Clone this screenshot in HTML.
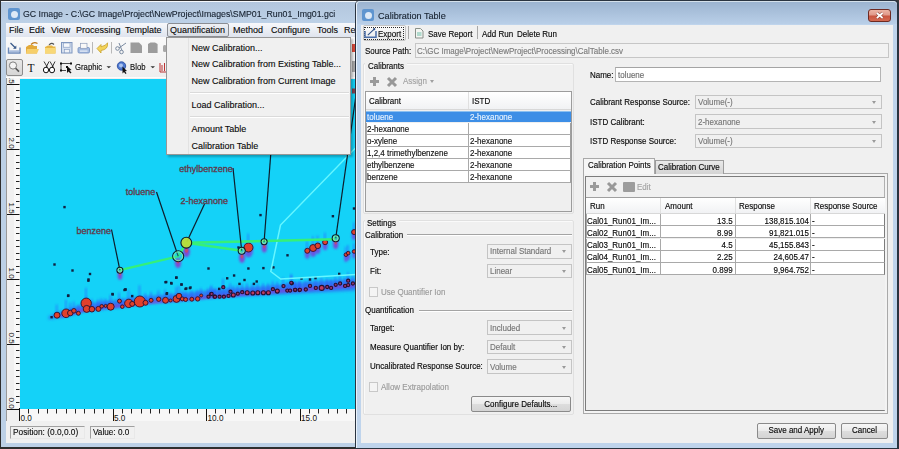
<!DOCTYPE html>
<html><head><meta charset="utf-8">
<style>
*{box-sizing:border-box}
html,body{margin:0;padding:0}
body{width:899px;height:449px;overflow:hidden;position:relative;background:#3a3a3a;font-family:"Liberation Sans",sans-serif;font-size:9px;color:#1e1e1e}
.a{position:absolute}
.t{position:absolute;white-space:nowrap;height:12px;line-height:12px;-webkit-text-stroke:0.12px currentColor;color:#0a0a0a}
.cb{border:1px solid #c4c4c4;background:#f0f0f0}
.arr{position:absolute;width:0;height:0;border-left:2.5px solid transparent;border-right:2.5px solid transparent;border-top:3px solid #9a9a9a}
.chk{width:9.5px;height:9.5px;border:1px solid #c8c8c8;background:#f4f4f4}
.btn{border:1px solid #8a8a8a;border-radius:2px;background:linear-gradient(#f6f6f6 0%,#ebebeb 50%,#dddddd 51%,#d4d4d4 100%)}
.d .t{font-size:8.6px;transform:scaleX(.93);transform-origin:0 50%;color:#0a0a0a;-webkit-text-stroke:0.15px currentColor}
</style></head><body>

<!-- ============ LEFT WINDOW ============ -->
<div class="a" style="left:0;top:0;width:362px;height:449px;background:#2e2e2e"></div>
<div class="a" style="left:1px;top:1px;width:360px;height:446px;background:#bcd0e6"></div>
<div class="a" style="left:1px;top:1px;width:360px;height:22px;background:linear-gradient(#b2c6dd,#bdd1e7);border-top:1px solid #f4f8fc"></div>
<!-- app icon -->
<div class="a" style="left:8px;top:8px;width:12px;height:12px;border-radius:2px;background:#5f95cf"></div>
<div class="a" style="left:10.5px;top:10.5px;width:7px;height:7px;border-radius:50%;background:#dde9f6"></div>
<div class="t" style="left:23px;top:7.8px;font-size:9.6px;transform:scaleX(.915);transform-origin:0 50%;color:#15202e">GC Image - C:\GC Image\Project\NewProject\Images\SMP01_Run01_Img01.gci</div>

<!-- menu bar -->
<div class="a" style="left:6px;top:23px;width:356px;height:14px;background:linear-gradient(#f7f8fb,#dfe4ee)"></div>
<div class="t" style="left:9px;top:24px">File</div>
<div class="t" style="left:29px;top:24px">Edit</div>
<div class="t" style="left:51px;top:24px">View</div>
<div class="t" style="left:76px;top:24px">Processing</div>
<div class="t" style="left:125px;top:24px">Template</div>
<div class="a" style="left:167px;top:23px;width:62px;height:14px;border:1px solid #8a8d93;border-radius:2px;background:linear-gradient(#eef0f4,#d9dde4)"></div>
<div class="t" style="left:170px;top:24px">Quantification</div>
<div class="t" style="left:233px;top:24px">Method</div>
<div class="t" style="left:271px;top:24px">Configure</div>
<div class="t" style="left:317px;top:24px">Tools</div>
<div class="t" style="left:344px;top:24px">Re</div>

<!-- toolbars -->
<div class="a" style="left:6px;top:37px;width:356px;height:41px;background:linear-gradient(#f9f9f9,#eeeeee)"></div>


<!-- toolbar icons row1 -->
<svg class="a" style="left:0;top:36px" width="170" height="42" viewBox="0 36 170 42">
 <!-- import tray -->
 <path d="M8.5,47.5 L8.5,53 L20,53 L20,47.5" fill="none" stroke="#6a88b8" stroke-width="1.4"/>
 <rect x="9.2" y="50.3" width="10" height="2" fill="#a9bddd"/>
 <path d="M10.5,43 L15.5,48" stroke="#3a5a8a" stroke-width="1.2"/>
 <path d="M13,48.8 L16.3,48.8 L16.3,45.5 Z" fill="#3a5a8a"/>
 <!-- open folder -->
 <path d="M26,47 L29,45 L33,45 L34,46 L37,46 L37,53.5 L26,53.5 Z" fill="#e3a93a"/>
 <path d="M27,49 L39,49 L37,53.5 L26,53.5 Z" fill="#f6cf6a"/>
 <path d="M31,44.5 Q34,41.5 37.5,43.5" stroke="#c07818" stroke-width="1.3" fill="none"/>
 <!-- folder -->
 <path d="M45,47 L48,45.5 L52,45.5 L53,46.5 L55.5,46.5 L55.5,53.5 L45,53.5 Z" fill="#e7b545"/>
 <rect x="45" y="48" width="10.5" height="5.5" fill="#f8d877"/>
 <path d="M49,45 Q51.5,42 54,44.5" stroke="#555" stroke-width="1.1" fill="none"/>
 <!-- save -->
 <rect x="61.5" y="42.5" width="10.5" height="10.5" fill="#d4deee" stroke="#8098c0" stroke-width="1"/>
 <rect x="63.5" y="43" width="6.5" height="4.2" fill="#f6f8fb" stroke="#8098c0" stroke-width="0.6"/>
 <rect x="64.3" y="49.3" width="5" height="3.5" fill="#f0f3f8" stroke="#8098c0" stroke-width="0.6"/>
 <!-- print -->
 <rect x="78" y="47.5" width="11.5" height="5.5" rx="1.2" fill="#a6bce0" stroke="#6f8cbc" stroke-width="0.8"/>
 <rect x="80.5" y="43.3" width="6.5" height="5" fill="#f8f8f8" stroke="#8a9ab8" stroke-width="0.7"/>
 <rect x="80" y="50.5" width="7.5" height="1.2" fill="#e8eef8"/>
 <rect x="92" y="42" width="1" height="11.5" fill="#b8b8b8"/>
 <!-- undo -->
 <path d="M97,48.5 L101,44.5 L101,46.8 Q106.5,45.5 107.5,42.8 Q108.5,49.5 101,50.5 L101,53 Z" fill="#f3d35a" stroke="#c9a22a" stroke-width="0.8"/>
 <rect x="111" y="42" width="1" height="11.5" fill="#b8b8b8"/>
 <!-- scissors -->
 <circle cx="117.5" cy="48.5" r="1.8" fill="none" stroke="#7a8aa0" stroke-width="1"/>
 <circle cx="121.5" cy="52" r="1.8" fill="none" stroke="#7a8aa0" stroke-width="1"/>
 <path d="M119,48 L126,43 M122,50.5 L119,43" stroke="#7a8aa0" stroke-width="1"/>
 <!-- copy/paste -->
 <path d="M130.5,42.5 L139,42.5 L142,45.5 L142,53 L130.5,53 Z" fill="#9c9c9c"/>
 <path d="M148,44 L150.5,42.5 L155,42.5 L157.6,44 L157.6,53 L148,53 Z" fill="#9c9c9c"/>
 <rect x="163" y="45" width="3.5" height="7" rx="1.5" fill="#a8a8a8"/>
</svg>
<!-- row2 -->
<div class="a" style="left:6px;top:59px;width:17px;height:16.5px;border:1px solid #8c8c8c;border-radius:2px;background:linear-gradient(#e8e8e8,#d6d6d6)"></div>
<svg class="a" style="left:0;top:56px" width="170" height="22" viewBox="0 56 170 22">
 <circle cx="13" cy="65.5" r="3.6" fill="#f4f4f4" stroke="#7e7e7e" stroke-width="1"/>
 <path d="M15.6,68.2 L19,71.6" stroke="#555" stroke-width="1.6"/>
 <text x="27.5" y="71.5" font-family="Liberation Serif" font-size="11.5" fill="#111">T</text>
 <!-- binoculars -->
 <ellipse cx="46" cy="70" rx="2.6" ry="2.8" fill="#fff" stroke="#111" stroke-width="1"/>
 <ellipse cx="52" cy="70" rx="2.6" ry="2.8" fill="#fff" stroke="#111" stroke-width="1"/>
 <path d="M44,61.5 L47.5,67.5 M49,61.5 L46,67.5 M50,61.5 L53.5,67.5 M55,61.5 L52,67.5" stroke="#222" stroke-width="0.9"/>
 <!-- graphic -->
 <path d="M61,63.5 L71,63.5 M61,63.5 L61,70.5 L66,70.5" stroke="#222" stroke-width="0.8" fill="none"/>
 <rect x="60" y="62.5" width="2" height="2" fill="#111"/><rect x="70" y="62.5" width="2" height="2" fill="#111"/><rect x="60" y="69.5" width="2" height="2" fill="#111"/><rect x="66" y="66" width="2" height="2" fill="#111"/>
 <path d="M67,66 L67,73 L68.5,71.5 L70.5,73.5 L71.5,72.5 L69.5,70.5 L71.5,70 Z" fill="#111"/>
 <path d="M106.5,66.3 L111,66.3 L108.75,68.3 Z" fill="#333"/>
 <!-- blob -->
 <circle cx="121.5" cy="66" r="4.2" fill="#4e78d0" stroke="#2d4fa0" stroke-width="0.9"/>
 <circle cx="121" cy="65.5" r="2" fill="#a9c2ee"/>
 <path d="M122.5,66.5 L122.5,73.5 L124,72 L125.5,74 L126.5,73.2 L125,71.3 L127,71 Z" fill="#111"/>
 <path d="M150.5,66.3 L155,66.3 L152.75,68.3 Z" fill="#333"/>
 <path d="M160,63 L160,72 L167,72" stroke="#b33" stroke-width="1" fill="none"/>
 <path d="M162,71 L162,65 M164.5,71 L164.5,63" stroke="#b33" stroke-width="1"/>
</svg>
<div class="t" style="left:74.7px;top:61px;font-size:8.6px;transform:scaleX(.9);transform-origin:0 50%">Graphic</div>
<div class="t" style="left:130px;top:61px;font-size:8.6px;transform:scaleX(.9);transform-origin:0 50%">Blob</div>
<div class="a" style="left:6px;top:76.5px;width:356px;height:1px;background:#fdfdfd"></div>

<div class="a" style="left:351.5px;top:43.5px;width:3.5px;height:8px;background:#d84a3a"></div>
<div class="a" style="left:351.5px;top:61px;width:3.5px;height:11px;background:#a8a8a8"></div>
<!-- rulers -->
<svg class="a" style="left:0;top:78px" width="360" height="344" viewBox="0 78 360 344">
<rect x="6" y="78" width="354" height="344" fill="#f0f0f0"/>
<rect x="14" y="78" width="5.5" height="330" fill="#f8f8f8"/>
<rect x="19.5" y="408" width="340" height="13.3" fill="#f7f7f7"/>
<rect x="6" y="78" width="1" height="344" fill="#9a9a9a"/>
<rect x="7" y="84" width="12.5" height="1" fill="#111"/>
<rect x="16" y="90" width="3.5" height="1" fill="#222"/>
<rect x="16" y="97" width="3.5" height="1" fill="#222"/>
<rect x="16" y="103" width="3.5" height="1" fill="#222"/>
<rect x="16" y="110" width="3.5" height="1" fill="#222"/>
<rect x="16" y="116" width="3.5" height="1" fill="#222"/>
<rect x="16" y="123" width="3.5" height="1" fill="#222"/>
<rect x="16" y="129" width="3.5" height="1" fill="#222"/>
<rect x="16" y="136" width="3.5" height="1" fill="#222"/>
<rect x="16" y="142" width="3.5" height="1" fill="#222"/>
<rect x="7" y="149" width="12.5" height="1" fill="#111"/>
<rect x="16" y="155" width="3.5" height="1" fill="#222"/>
<rect x="16" y="162" width="3.5" height="1" fill="#222"/>
<rect x="16" y="168" width="3.5" height="1" fill="#222"/>
<rect x="16" y="175" width="3.5" height="1" fill="#222"/>
<rect x="16" y="181" width="3.5" height="1" fill="#222"/>
<rect x="16" y="188" width="3.5" height="1" fill="#222"/>
<rect x="16" y="194" width="3.5" height="1" fill="#222"/>
<rect x="16" y="201" width="3.5" height="1" fill="#222"/>
<rect x="16" y="207" width="3.5" height="1" fill="#222"/>
<rect x="7" y="214" width="12.5" height="1" fill="#111"/>
<rect x="16" y="220" width="3.5" height="1" fill="#222"/>
<rect x="16" y="227" width="3.5" height="1" fill="#222"/>
<rect x="16" y="233" width="3.5" height="1" fill="#222"/>
<rect x="16" y="240" width="3.5" height="1" fill="#222"/>
<rect x="16" y="246" width="3.5" height="1" fill="#222"/>
<rect x="16" y="253" width="3.5" height="1" fill="#222"/>
<rect x="16" y="259" width="3.5" height="1" fill="#222"/>
<rect x="16" y="266" width="3.5" height="1" fill="#222"/>
<rect x="16" y="272" width="3.5" height="1" fill="#222"/>
<rect x="7" y="279" width="12.5" height="1" fill="#111"/>
<rect x="16" y="285" width="3.5" height="1" fill="#222"/>
<rect x="16" y="292" width="3.5" height="1" fill="#222"/>
<rect x="16" y="298" width="3.5" height="1" fill="#222"/>
<rect x="16" y="305" width="3.5" height="1" fill="#222"/>
<rect x="16" y="311" width="3.5" height="1" fill="#222"/>
<rect x="16" y="318" width="3.5" height="1" fill="#222"/>
<rect x="16" y="324" width="3.5" height="1" fill="#222"/>
<rect x="16" y="331" width="3.5" height="1" fill="#222"/>
<rect x="16" y="337" width="3.5" height="1" fill="#222"/>
<rect x="7" y="344" width="12.5" height="1" fill="#111"/>
<rect x="16" y="350" width="3.5" height="1" fill="#222"/>
<rect x="16" y="357" width="3.5" height="1" fill="#222"/>
<rect x="16" y="363" width="3.5" height="1" fill="#222"/>
<rect x="16" y="370" width="3.5" height="1" fill="#222"/>
<rect x="16" y="376" width="3.5" height="1" fill="#222"/>
<rect x="16" y="383" width="3.5" height="1" fill="#222"/>
<rect x="16" y="389" width="3.5" height="1" fill="#222"/>
<rect x="16" y="396" width="3.5" height="1" fill="#222"/>
<rect x="16" y="402" width="3.5" height="1" fill="#222"/>
<rect x="7" y="409" width="12.5" height="1" fill="#111"/>
<text transform="translate(8.6,72.5) rotate(90)" font-family="Liberation Sans" font-size="8" fill="#111">2.5</text>
<text transform="translate(8.6,137.5) rotate(90)" font-family="Liberation Sans" font-size="8" fill="#111">2.0</text>
<text transform="translate(8.6,202.5) rotate(90)" font-family="Liberation Sans" font-size="8" fill="#111">1.5</text>
<text transform="translate(8.6,267.5) rotate(90)" font-family="Liberation Sans" font-size="8" fill="#111">1.0</text>
<text transform="translate(8.6,332.5) rotate(90)" font-family="Liberation Sans" font-size="8" fill="#111">0.5</text>
<text transform="translate(8.6,397.5) rotate(90)" font-family="Liberation Sans" font-size="8" fill="#111">0.0</text>
<rect x="19" y="408" width="1" height="13" fill="#111"/>
<rect x="28" y="409" width="1" height="4.5" fill="#222"/>
<rect x="38" y="409" width="1" height="4.5" fill="#222"/>
<rect x="47" y="409" width="1" height="4.5" fill="#222"/>
<rect x="56" y="409" width="1" height="4.5" fill="#222"/>
<rect x="66" y="409" width="1" height="4.5" fill="#222"/>
<rect x="75" y="409" width="1" height="4.5" fill="#222"/>
<rect x="84" y="409" width="1" height="4.5" fill="#222"/>
<rect x="94" y="409" width="1" height="4.5" fill="#222"/>
<rect x="103" y="409" width="1" height="4.5" fill="#222"/>
<rect x="113" y="408" width="1" height="13" fill="#111"/>
<rect x="122" y="409" width="1" height="4.5" fill="#222"/>
<rect x="131" y="409" width="1" height="4.5" fill="#222"/>
<rect x="141" y="409" width="1" height="4.5" fill="#222"/>
<rect x="150" y="409" width="1" height="4.5" fill="#222"/>
<rect x="159" y="409" width="1" height="4.5" fill="#222"/>
<rect x="169" y="409" width="1" height="4.5" fill="#222"/>
<rect x="178" y="409" width="1" height="4.5" fill="#222"/>
<rect x="187" y="409" width="1" height="4.5" fill="#222"/>
<rect x="197" y="409" width="1" height="4.5" fill="#222"/>
<rect x="206" y="408" width="1" height="13" fill="#111"/>
<rect x="215" y="409" width="1" height="4.5" fill="#222"/>
<rect x="225" y="409" width="1" height="4.5" fill="#222"/>
<rect x="234" y="409" width="1" height="4.5" fill="#222"/>
<rect x="243" y="409" width="1" height="4.5" fill="#222"/>
<rect x="253" y="409" width="1" height="4.5" fill="#222"/>
<rect x="262" y="409" width="1" height="4.5" fill="#222"/>
<rect x="271" y="409" width="1" height="4.5" fill="#222"/>
<rect x="281" y="409" width="1" height="4.5" fill="#222"/>
<rect x="290" y="409" width="1" height="4.5" fill="#222"/>
<rect x="300" y="408" width="1" height="13" fill="#111"/>
<rect x="309" y="409" width="1" height="4.5" fill="#222"/>
<rect x="318" y="409" width="1" height="4.5" fill="#222"/>
<rect x="328" y="409" width="1" height="4.5" fill="#222"/>
<rect x="337" y="409" width="1" height="4.5" fill="#222"/>
<rect x="346" y="409" width="1" height="4.5" fill="#222"/>
<text x="20.5" y="420.5" font-family="Liberation Sans" font-size="8.2" fill="#111">0.0</text>
<text x="114.0" y="420.5" font-family="Liberation Sans" font-size="8.2" fill="#111">5.0</text>
<text x="207.5" y="420.5" font-family="Liberation Sans" font-size="8.2" fill="#111">10.0</text>
<text x="301.0" y="420.5" font-family="Liberation Sans" font-size="8.2" fill="#111">15.0</text>
</svg>
<!--PLOT--><svg class="a" style="left:19.5px;top:78.5px" width="336" height="330" viewBox="19.5 78.5 336 330">
<defs><filter id="bl" x="-50%" y="-50%" width="200%" height="200%"><feGaussianBlur stdDeviation="1.6"/></filter><filter id="bl2" x="-50%" y="-50%" width="200%" height="200%"><feGaussianBlur stdDeviation="0.9"/></filter></defs>
<rect x="19.5" y="78.5" width="336" height="330" fill="#14d2f8"/>
<path d="M48,316 L60,311 L85,303 L120,299 L140,296 L180,293 L215,289 L260,286 L300,282 L356,278 L356,290 L300,293 L260,295 L215,297 L180,300 L140,303 L120,307 L85,311 L60,317 L48,319 Z" fill="#3a3cf0" opacity="0.55" filter="url(#bl)"/>
<path d="M60,316 L85,309 L140,303 L215,296 L300,289 L356,285" stroke="#8a36d8" stroke-width="3" fill="none" opacity="0.7" filter="url(#bl2)"/>
<rect x="55.3" y="304.1" width="1.8" height="10.6" fill="#2f44ff" opacity="0.45" filter="url(#bl2)"/>
<rect x="64.4" y="299.3" width="1.8" height="13.5" fill="#2f44ff" opacity="0.45" filter="url(#bl2)"/>
<rect x="68.6" y="302.3" width="1.8" height="10.2" fill="#2f44ff" opacity="0.45" filter="url(#bl2)"/>
<rect x="72.2" y="301.2" width="1.8" height="9.1" fill="#2f44ff" opacity="0.45" filter="url(#bl2)"/>
<rect x="76.7" y="304.4" width="1.8" height="8.4" fill="#2f44ff" opacity="0.45" filter="url(#bl2)"/>
<rect x="84.5" y="287.4" width="1.8" height="15.4" fill="#2f44ff" opacity="0.45" filter="url(#bl2)"/>
<rect x="85.0" y="296.7" width="1.8" height="11.7" fill="#2f44ff" opacity="0.45" filter="url(#bl2)"/>
<rect x="90.2" y="298.5" width="1.8" height="10.2" fill="#2f44ff" opacity="0.45" filter="url(#bl2)"/>
<rect x="96.7" y="298.9" width="1.8" height="9.5" fill="#2f44ff" opacity="0.45" filter="url(#bl2)"/>
<rect x="100.0" y="297.8" width="1.8" height="8.0" fill="#2f44ff" opacity="0.45" filter="url(#bl2)"/>
<rect x="103.9" y="298.1" width="1.8" height="7.3" fill="#2f44ff" opacity="0.45" filter="url(#bl2)"/>
<rect x="109.0" y="294.5" width="1.8" height="11.7" fill="#2f44ff" opacity="0.45" filter="url(#bl2)"/>
<rect x="117.8" y="292.2" width="1.8" height="8.4" fill="#2f44ff" opacity="0.45" filter="url(#bl2)"/>
<rect x="120.6" y="298.2" width="1.8" height="8.0" fill="#2f44ff" opacity="0.45" filter="url(#bl2)"/>
<rect x="127.1" y="289.7" width="1.8" height="13.2" fill="#2f44ff" opacity="0.45" filter="url(#bl2)"/>
<rect x="130.5" y="293.9" width="1.8" height="9.5" fill="#2f44ff" opacity="0.45" filter="url(#bl2)"/>
<rect x="138.1" y="284.9" width="1.8" height="16.1" fill="#2f44ff" opacity="0.45" filter="url(#bl2)"/>
<rect x="143.8" y="292.8" width="1.8" height="9.5" fill="#2f44ff" opacity="0.45" filter="url(#bl2)"/>
<rect x="149.4" y="291.4" width="1.8" height="8.4" fill="#2f44ff" opacity="0.45" filter="url(#bl2)"/>
<rect x="157.0" y="289.9" width="1.8" height="8.8" fill="#2f44ff" opacity="0.45" filter="url(#bl2)"/>
<rect x="163.8" y="289.2" width="1.8" height="10.6" fill="#2f44ff" opacity="0.45" filter="url(#bl2)"/>
<rect x="168.9" y="292.7" width="1.8" height="7.3" fill="#2f44ff" opacity="0.45" filter="url(#bl2)"/>
<rect x="174.8" y="286.7" width="1.8" height="11.7" fill="#2f44ff" opacity="0.45" filter="url(#bl2)"/>
<rect x="177.3" y="285.4" width="1.8" height="10.2" fill="#2f44ff" opacity="0.45" filter="url(#bl2)"/>
<rect x="180.6" y="290.0" width="1.8" height="8.4" fill="#2f44ff" opacity="0.45" filter="url(#bl2)"/>
<rect x="183.9" y="290.6" width="1.8" height="8.4" fill="#2f44ff" opacity="0.45" filter="url(#bl2)"/>
<rect x="190.1" y="290.3" width="1.8" height="8.4" fill="#2f44ff" opacity="0.45" filter="url(#bl2)"/>
<rect x="196.0" y="289.6" width="1.8" height="8.8" fill="#2f44ff" opacity="0.45" filter="url(#bl2)"/>
<rect x="199.5" y="287.7" width="1.8" height="7.3" fill="#2f44ff" opacity="0.45" filter="url(#bl2)"/>
<rect x="206.8" y="287.8" width="1.8" height="8.4" fill="#2f44ff" opacity="0.45" filter="url(#bl2)"/>
<rect x="209.5" y="286.3" width="1.8" height="7.3" fill="#2f44ff" opacity="0.45" filter="url(#bl2)"/>
<rect x="212.8" y="288.9" width="1.8" height="7.3" fill="#2f44ff" opacity="0.45" filter="url(#bl2)"/>
<rect x="209.9" y="285.0" width="1.8" height="8.4" fill="#2f44ff" opacity="0.45" filter="url(#bl2)"/>
<rect x="213.3" y="287.8" width="1.8" height="8.4" fill="#2f44ff" opacity="0.45" filter="url(#bl2)"/>
<rect x="217.9" y="287.8" width="1.8" height="8.4" fill="#2f44ff" opacity="0.45" filter="url(#bl2)"/>
<rect x="222.2" y="287.8" width="1.8" height="8.4" fill="#2f44ff" opacity="0.45" filter="url(#bl2)"/>
<rect x="226.8" y="287.0" width="1.8" height="8.4" fill="#2f44ff" opacity="0.45" filter="url(#bl2)"/>
<rect x="231.6" y="285.0" width="1.8" height="9.5" fill="#2f44ff" opacity="0.45" filter="url(#bl2)"/>
<rect x="236.1" y="284.8" width="1.8" height="8.4" fill="#2f44ff" opacity="0.45" filter="url(#bl2)"/>
<rect x="240.5" y="283.3" width="1.8" height="8.4" fill="#2f44ff" opacity="0.45" filter="url(#bl2)"/>
<rect x="245.5" y="282.8" width="1.8" height="9.5" fill="#2f44ff" opacity="0.45" filter="url(#bl2)"/>
<rect x="251.1" y="283.0" width="1.8" height="9.5" fill="#2f44ff" opacity="0.45" filter="url(#bl2)"/>
<rect x="256.1" y="282.8" width="1.8" height="9.5" fill="#2f44ff" opacity="0.45" filter="url(#bl2)"/>
<rect x="261.7" y="282.8" width="1.8" height="9.5" fill="#2f44ff" opacity="0.45" filter="url(#bl2)"/>
<rect x="266.7" y="282.8" width="1.8" height="9.5" fill="#2f44ff" opacity="0.45" filter="url(#bl2)"/>
<rect x="271.2" y="280.3" width="1.8" height="8.4" fill="#2f44ff" opacity="0.45" filter="url(#bl2)"/>
<rect x="275.6" y="281.1" width="1.8" height="9.5" fill="#2f44ff" opacity="0.45" filter="url(#bl2)"/>
<rect x="281.8" y="277.2" width="1.8" height="8.4" fill="#2f44ff" opacity="0.45" filter="url(#bl2)"/>
<rect x="285.6" y="281.7" width="1.8" height="8.4" fill="#2f44ff" opacity="0.45" filter="url(#bl2)"/>
<rect x="288.4" y="281.7" width="1.8" height="8.4" fill="#2f44ff" opacity="0.45" filter="url(#bl2)"/>
<rect x="293.4" y="281.1" width="1.8" height="8.4" fill="#2f44ff" opacity="0.45" filter="url(#bl2)"/>
<rect x="297.8" y="281.1" width="1.8" height="8.4" fill="#2f44ff" opacity="0.45" filter="url(#bl2)"/>
<rect x="228.8" y="282.8" width="1.8" height="8.4" fill="#2f44ff" opacity="0.45" filter="url(#bl2)"/>
<rect x="221.6" y="278.3" width="1.8" height="8.4" fill="#2f44ff" opacity="0.45" filter="url(#bl2)"/>
<rect x="290.1" y="274.4" width="1.8" height="8.4" fill="#2f44ff" opacity="0.45" filter="url(#bl2)"/>
<rect x="289.6" y="273.9" width="1.8" height="8.4" fill="#2f44ff" opacity="0.45" filter="url(#bl2)"/>
<rect x="293.5" y="280.9" width="1.8" height="8.4" fill="#2f44ff" opacity="0.45" filter="url(#bl2)"/>
<rect x="298.2" y="280.9" width="1.8" height="8.4" fill="#2f44ff" opacity="0.45" filter="url(#bl2)"/>
<rect x="304.1" y="280.6" width="1.8" height="8.4" fill="#2f44ff" opacity="0.45" filter="url(#bl2)"/>
<rect x="308.3" y="277.0" width="1.8" height="8.4" fill="#2f44ff" opacity="0.45" filter="url(#bl2)"/>
<rect x="314.1" y="279.0" width="1.8" height="8.4" fill="#2f44ff" opacity="0.45" filter="url(#bl2)"/>
<rect x="320.0" y="276.8" width="1.8" height="10.6" fill="#2f44ff" opacity="0.45" filter="url(#bl2)"/>
<rect x="325.5" y="278.1" width="1.8" height="8.4" fill="#2f44ff" opacity="0.45" filter="url(#bl2)"/>
<rect x="329.4" y="279.0" width="1.8" height="8.4" fill="#2f44ff" opacity="0.45" filter="url(#bl2)"/>
<rect x="334.0" y="275.9" width="1.8" height="8.4" fill="#2f44ff" opacity="0.45" filter="url(#bl2)"/>
<rect x="338.4" y="274.6" width="1.8" height="8.4" fill="#2f44ff" opacity="0.45" filter="url(#bl2)"/>
<rect x="343.4" y="277.0" width="1.8" height="8.4" fill="#2f44ff" opacity="0.45" filter="url(#bl2)"/>
<rect x="346.5" y="271.8" width="1.8" height="8.4" fill="#2f44ff" opacity="0.45" filter="url(#bl2)"/>
<rect x="346.5" y="276.2" width="1.8" height="8.4" fill="#2f44ff" opacity="0.45" filter="url(#bl2)"/>
<rect x="351.2" y="274.6" width="1.8" height="8.4" fill="#2f44ff" opacity="0.45" filter="url(#bl2)"/>
<rect x="246.8" y="233.1" width="1.8" height="13.9" fill="#2f44ff" opacity="0.45" filter="url(#bl2)"/>
<rect x="305.6" y="240.8" width="1.8" height="9.5" fill="#2f44ff" opacity="0.45" filter="url(#bl2)"/>
<rect x="311.4" y="235.8" width="1.8" height="11.7" fill="#2f44ff" opacity="0.45" filter="url(#bl2)"/>
<rect x="316.1" y="235.1" width="1.8" height="10.2" fill="#2f44ff" opacity="0.45" filter="url(#bl2)"/>
<rect x="323.4" y="232.2" width="1.8" height="9.5" fill="#2f44ff" opacity="0.45" filter="url(#bl2)"/>
<rect x="352.4" y="222.1" width="1.8" height="9.5" fill="#2f44ff" opacity="0.45" filter="url(#bl2)"/>
<rect x="344.2" y="246.2" width="1.8" height="8.0" fill="#2f44ff" opacity="0.45" filter="url(#bl2)"/>
<rect x="346.5" y="244.6" width="1.8" height="8.0" fill="#2f44ff" opacity="0.45" filter="url(#bl2)"/>
<rect x="352.4" y="243.0" width="1.8" height="8.0" fill="#2f44ff" opacity="0.45" filter="url(#bl2)"/>
<ellipse cx="119.5" cy="274.5" rx="2.4" ry="4.8" fill="#8a3ad0" opacity="0.9" filter="url(#bl2)"/>
<ellipse cx="119.5" cy="273.5" rx="1.1" ry="1.4" fill="#d04a60" opacity="0.8"/>
<ellipse cx="177.5" cy="262.0" rx="3.1" ry="5.5" fill="#8a3ad0" opacity="0.9" filter="url(#bl2)"/>
<ellipse cx="177.5" cy="261.0" rx="1.5" ry="2.0" fill="#d04a60" opacity="0.8"/>
<ellipse cx="186.0" cy="251.0" rx="3.4" ry="5.8" fill="#8a3ad0" opacity="0.9" filter="url(#bl2)"/>
<ellipse cx="186.0" cy="250.0" rx="1.7" ry="2.2" fill="#d04a60" opacity="0.8"/>
<ellipse cx="241.5" cy="257.0" rx="3.0" ry="5.4" fill="#8a3ad0" opacity="0.9" filter="url(#bl2)"/>
<ellipse cx="241.5" cy="256.0" rx="1.4" ry="1.9" fill="#d04a60" opacity="0.8"/>
<ellipse cx="263.8" cy="247.0" rx="2.6" ry="5.0" fill="#8a3ad0" opacity="0.9" filter="url(#bl2)"/>
<ellipse cx="263.8" cy="246.0" rx="1.2" ry="1.6" fill="#d04a60" opacity="0.8"/>
<ellipse cx="335.2" cy="243.5" rx="2.6" ry="5.0" fill="#8a3ad0" opacity="0.9" filter="url(#bl2)"/>
<ellipse cx="335.2" cy="242.5" rx="1.2" ry="1.6" fill="#d04a60" opacity="0.8"/>
<ellipse cx="248.0" cy="250.0" rx="4.5" ry="7.0" fill="#7a3ae0" opacity="0.8" filter="url(#bl2)"/>
<ellipse cx="306.8" cy="253.3" rx="2.5" ry="5.0" fill="#7a3ae0" opacity="0.8" filter="url(#bl2)"/>
<ellipse cx="312.6" cy="250.5" rx="3.5" ry="6.0" fill="#7a3ae0" opacity="0.8" filter="url(#bl2)"/>
<ellipse cx="317.3" cy="248.3" rx="2.8" ry="5.3" fill="#7a3ae0" opacity="0.8" filter="url(#bl2)"/>
<ellipse cx="324.6" cy="244.7" rx="2.5" ry="5.0" fill="#7a3ae0" opacity="0.8" filter="url(#bl2)"/>
<ellipse cx="353.6" cy="234.6" rx="2.5" ry="5.0" fill="#7a3ae0" opacity="0.8" filter="url(#bl2)"/>
<ellipse cx="345.4" cy="257.2" rx="1.8" ry="4.3" fill="#7a3ae0" opacity="0.8" filter="url(#bl2)"/>
<ellipse cx="347.7" cy="255.6" rx="1.8" ry="4.3" fill="#7a3ae0" opacity="0.8" filter="url(#bl2)"/>
<ellipse cx="353.6" cy="254.0" rx="1.8" ry="4.3" fill="#7a3ae0" opacity="0.8" filter="url(#bl2)"/>
<circle cx="56.5" cy="314.7" r="3" fill="#e0402c" stroke="#2a1030" stroke-width="0.9"/>
<circle cx="65.6" cy="312.8" r="4.3" fill="#e0402c" stroke="#2a1030" stroke-width="0.9"/>
<circle cx="69.8" cy="312.5" r="2.8" fill="#e0402c" stroke="#2a1030" stroke-width="0.9"/>
<circle cx="73.4" cy="310.3" r="2.3" fill="#e0402c" stroke="#2a1030" stroke-width="0.9"/>
<circle cx="77.9" cy="312.8" r="2" fill="#e0402c" stroke="#2a1030" stroke-width="0.9"/>
<circle cx="85.7" cy="302.8" r="5.2" fill="#e0402c" stroke="#2a1030" stroke-width="0.9"/>
<circle cx="86.2" cy="308.4" r="3.5" fill="#e0402c" stroke="#2a1030" stroke-width="0.9"/>
<circle cx="91.4" cy="308.7" r="2.8" fill="#e0402c" stroke="#2a1030" stroke-width="0.9"/>
<circle cx="97.9" cy="308.4" r="2.5" fill="#e0402c" stroke="#2a1030" stroke-width="0.9"/>
<circle cx="101.2" cy="305.8" r="1.8" fill="#e0402c" stroke="#2a1030" stroke-width="0.9"/>
<circle cx="105.1" cy="305.4" r="1.5" fill="#e0402c" stroke="#2a1030" stroke-width="0.9"/>
<circle cx="110.2" cy="306.2" r="3.5" fill="#e0402c" stroke="#2a1030" stroke-width="0.9"/>
<circle cx="119" cy="300.6" r="2" fill="#e0402c" stroke="#2a1030" stroke-width="0.9"/>
<circle cx="121.8" cy="306.2" r="1.8" fill="#e0402c" stroke="#2a1030" stroke-width="0.9"/>
<circle cx="128.3" cy="302.9" r="4.2" fill="#e0402c" stroke="#2a1030" stroke-width="0.9"/>
<circle cx="131.7" cy="303.4" r="2.5" fill="#e0402c" stroke="#2a1030" stroke-width="0.9"/>
<circle cx="139.3" cy="301" r="5.5" fill="#e0402c" stroke="#2a1030" stroke-width="0.9"/>
<circle cx="145" cy="302.3" r="2.5" fill="#e0402c" stroke="#2a1030" stroke-width="0.9"/>
<circle cx="150.6" cy="299.8" r="2" fill="#e0402c" stroke="#2a1030" stroke-width="0.9"/>
<circle cx="158.2" cy="298.7" r="2.2" fill="#e0402c" stroke="#2a1030" stroke-width="0.9"/>
<circle cx="165" cy="299.8" r="3" fill="#e0402c" stroke="#2a1030" stroke-width="0.9"/>
<circle cx="170.1" cy="300" r="1.5" fill="#e0402c" stroke="#2a1030" stroke-width="0.9"/>
<circle cx="176" cy="298.4" r="3.5" fill="#e0402c" stroke="#2a1030" stroke-width="0.9"/>
<circle cx="178.5" cy="295.6" r="2.8" fill="#e0402c" stroke="#2a1030" stroke-width="0.9"/>
<circle cx="181.8" cy="298.4" r="2" fill="#e0402c" stroke="#2a1030" stroke-width="0.9"/>
<circle cx="185.1" cy="299" r="2" fill="#e0402c" stroke="#2a1030" stroke-width="0.9"/>
<circle cx="191.3" cy="298.7" r="2" fill="#e0402c" stroke="#2a1030" stroke-width="0.9"/>
<circle cx="197.2" cy="298.4" r="2.2" fill="#e0402c" stroke="#2a1030" stroke-width="0.9"/>
<circle cx="200.7" cy="295" r="1.5" fill="#e0402c" stroke="#2a1030" stroke-width="0.9"/>
<circle cx="208" cy="296.2" r="1.6" fill="#9a3070" stroke="#24102e" stroke-width="1.1"/>
<circle cx="210.7" cy="293.6" r="1.6" fill="#9a3070" stroke="#24102e" stroke-width="1.1"/>
<circle cx="214" cy="296.2" r="1.6" fill="#9a3070" stroke="#24102e" stroke-width="1.1"/>
<circle cx="211.1" cy="293.4" r="1.6" fill="#9a3070" stroke="#24102e" stroke-width="1.1"/>
<circle cx="214.5" cy="296.2" r="1.6" fill="#9a3070" stroke="#24102e" stroke-width="1.1"/>
<circle cx="219.1" cy="296.2" r="1.6" fill="#9a3070" stroke="#24102e" stroke-width="1.1"/>
<circle cx="223.4" cy="296.2" r="1.6" fill="#9a3070" stroke="#24102e" stroke-width="1.1"/>
<circle cx="228" cy="295.4" r="1.6" fill="#9a3070" stroke="#24102e" stroke-width="1.1"/>
<circle cx="232.8" cy="294.5" r="2.0" fill="#c03a60" stroke="#24102e" stroke-width="1.1"/>
<circle cx="237.3" cy="293.2" r="1.6" fill="#9a3070" stroke="#24102e" stroke-width="1.1"/>
<circle cx="241.7" cy="291.7" r="1.6" fill="#9a3070" stroke="#24102e" stroke-width="1.1"/>
<circle cx="246.7" cy="292.3" r="2.0" fill="#c03a60" stroke="#24102e" stroke-width="1.1"/>
<circle cx="252.3" cy="292.5" r="2.0" fill="#c03a60" stroke="#24102e" stroke-width="1.1"/>
<circle cx="257.3" cy="292.3" r="2.0" fill="#c03a60" stroke="#24102e" stroke-width="1.1"/>
<circle cx="262.9" cy="292.3" r="2.0" fill="#c03a60" stroke="#24102e" stroke-width="1.1"/>
<circle cx="267.9" cy="292.3" r="2.0" fill="#c03a60" stroke="#24102e" stroke-width="1.1"/>
<circle cx="272.4" cy="288.7" r="1.6" fill="#9a3070" stroke="#24102e" stroke-width="1.1"/>
<circle cx="276.8" cy="290.6" r="2.0" fill="#c03a60" stroke="#24102e" stroke-width="1.1"/>
<circle cx="283" cy="285.6" r="1.6" fill="#9a3070" stroke="#24102e" stroke-width="1.1"/>
<circle cx="286.8" cy="290.1" r="1.6" fill="#9a3070" stroke="#24102e" stroke-width="1.1"/>
<circle cx="289.6" cy="290.1" r="1.6" fill="#9a3070" stroke="#24102e" stroke-width="1.1"/>
<circle cx="294.6" cy="289.5" r="1.6" fill="#9a3070" stroke="#24102e" stroke-width="1.1"/>
<circle cx="299" cy="289.5" r="1.6" fill="#9a3070" stroke="#24102e" stroke-width="1.1"/>
<circle cx="230" cy="291.2" r="1.6" fill="#9a3070" stroke="#24102e" stroke-width="1.1"/>
<circle cx="222.8" cy="286.7" r="1.6" fill="#9a3070" stroke="#24102e" stroke-width="1.1"/>
<circle cx="291.3" cy="282.8" r="1.6" fill="#9a3070" stroke="#24102e" stroke-width="1.1"/>
<circle cx="290.8" cy="282.3" r="1.6" fill="#9a3070" stroke="#24102e" stroke-width="1.1"/>
<circle cx="294.7" cy="289.3" r="1.6" fill="#9a3070" stroke="#24102e" stroke-width="1.1"/>
<circle cx="299.4" cy="289.3" r="1.6" fill="#9a3070" stroke="#24102e" stroke-width="1.1"/>
<circle cx="305.3" cy="289" r="1.6" fill="#9a3070" stroke="#24102e" stroke-width="1.1"/>
<circle cx="309.5" cy="285.4" r="1.6" fill="#9a3070" stroke="#24102e" stroke-width="1.1"/>
<circle cx="315.3" cy="287.4" r="1.6" fill="#9a3070" stroke="#24102e" stroke-width="1.1"/>
<circle cx="321.2" cy="287.4" r="2.5" fill="#c03a60" stroke="#24102e" stroke-width="1.1"/>
<circle cx="326.7" cy="286.5" r="1.6" fill="#9a3070" stroke="#24102e" stroke-width="1.1"/>
<circle cx="330.6" cy="287.4" r="1.6" fill="#9a3070" stroke="#24102e" stroke-width="1.1"/>
<circle cx="335.2" cy="284.3" r="1.6" fill="#9a3070" stroke="#24102e" stroke-width="1.1"/>
<circle cx="339.6" cy="283" r="1.6" fill="#9a3070" stroke="#24102e" stroke-width="1.1"/>
<circle cx="344.6" cy="285.4" r="1.6" fill="#9a3070" stroke="#24102e" stroke-width="1.1"/>
<circle cx="347.7" cy="280.2" r="1.6" fill="#9a3070" stroke="#24102e" stroke-width="1.1"/>
<circle cx="347.7" cy="284.6" r="1.6" fill="#9a3070" stroke="#24102e" stroke-width="1.1"/>
<circle cx="352.4" cy="283" r="1.6" fill="#9a3070" stroke="#24102e" stroke-width="1.1"/>
<circle cx="248" cy="247" r="4.5" fill="#e0402c" stroke="#2a1030" stroke-width="0.9"/>
<circle cx="306.8" cy="250.3" r="2.5" fill="#e0402c" stroke="#2a1030" stroke-width="0.9"/>
<circle cx="312.6" cy="247.5" r="3.5" fill="#e0402c" stroke="#2a1030" stroke-width="0.9"/>
<circle cx="317.3" cy="245.3" r="2.8" fill="#e0402c" stroke="#2a1030" stroke-width="0.9"/>
<circle cx="324.6" cy="241.7" r="2.5" fill="#e0402c" stroke="#2a1030" stroke-width="0.9"/>
<circle cx="353.6" cy="231.6" r="2.5" fill="#e0402c" stroke="#2a1030" stroke-width="0.9"/>
<circle cx="345.4" cy="254.2" r="1.8" fill="#e0402c" stroke="#2a1030" stroke-width="0.9"/>
<circle cx="347.7" cy="252.6" r="1.8" fill="#e0402c" stroke="#2a1030" stroke-width="0.9"/>
<circle cx="353.6" cy="251" r="1.8" fill="#e0402c" stroke="#2a1030" stroke-width="0.9"/>
<rect x="49.9" y="315.5" width="2.4" height="2.4" fill="#102040"/>
<rect x="66.6" y="293.8" width="2.4" height="2.4" fill="#102040"/>
<rect x="86.7" y="279.0" width="2.4" height="2.4" fill="#102040"/>
<rect x="111.0" y="292.7" width="2.4" height="2.4" fill="#102040"/>
<rect x="123.7" y="287.8" width="2.4" height="2.4" fill="#102040"/>
<rect x="174.5" y="276.0" width="2.4" height="2.4" fill="#102040"/>
<rect x="163.8" y="280.5" width="2.4" height="2.4" fill="#102040"/>
<rect x="169.5" y="281.3" width="2.4" height="2.4" fill="#102040"/>
<rect x="179.8" y="282.8" width="2.4" height="2.4" fill="#102040"/>
<rect x="183.8" y="287.2" width="2.4" height="2.4" fill="#102040"/>
<rect x="188.2" y="286.4" width="2.4" height="2.4" fill="#102040"/>
<rect x="165.0" y="292.2" width="2.4" height="2.4" fill="#102040"/>
<rect x="130.5" y="294.4" width="2.4" height="2.4" fill="#102040"/>
<rect x="123.8" y="287.8" width="2.4" height="2.4" fill="#102040"/>
<rect x="217.5" y="287.2" width="2.4" height="2.4" fill="#102040"/>
<rect x="225.5" y="276.6" width="2.4" height="2.4" fill="#102040"/>
<rect x="232.4" y="273.8" width="2.4" height="2.4" fill="#102040"/>
<rect x="237.8" y="282.2" width="2.4" height="2.4" fill="#102040"/>
<rect x="242.8" y="278.3" width="2.4" height="2.4" fill="#102040"/>
<rect x="252.2" y="282.2" width="2.4" height="2.4" fill="#102040"/>
<rect x="255.0" y="279.8" width="2.4" height="2.4" fill="#102040"/>
<rect x="246.7" y="266.8" width="2.4" height="2.4" fill="#102040"/>
<rect x="261.7" y="266.4" width="2.4" height="2.4" fill="#102040"/>
<rect x="271.7" y="265.7" width="2.4" height="2.4" fill="#102040"/>
<rect x="337.5" y="272.2" width="2.4" height="2.4" fill="#102040"/>
<rect x="299.8" y="276.8" width="2.4" height="2.4" fill="#102040"/>
<rect x="308.3" y="277.8" width="2.4" height="2.4" fill="#102040"/>
<rect x="313.8" y="276.4" width="2.4" height="2.4" fill="#102040"/>
<rect x="52.8" y="262.8" width="2.4" height="2.4" fill="#102040"/>
<rect x="70.8" y="268.8" width="2.4" height="2.4" fill="#102040"/>
<rect x="88.3" y="272.3" width="2.4" height="2.4" fill="#102040"/>
<rect x="86.8" y="277.8" width="2.4" height="2.4" fill="#102040"/>
<rect x="66.4" y="294.2" width="2.4" height="2.4" fill="#102040"/>
<rect x="110.8" y="292.3" width="2.4" height="2.4" fill="#102040"/>
<rect x="122.8" y="288.3" width="2.4" height="2.4" fill="#102040"/>
<rect x="164.5" y="280.3" width="2.4" height="2.4" fill="#102040"/>
<rect x="174.8" y="275.8" width="2.4" height="2.4" fill="#102040"/>
<rect x="169.8" y="281.8" width="2.4" height="2.4" fill="#102040"/>
<rect x="179.8" y="282.8" width="2.4" height="2.4" fill="#102040"/>
<rect x="165.3" y="291.5" width="2.4" height="2.4" fill="#102040"/>
<rect x="184.6" y="286.8" width="2.4" height="2.4" fill="#102040"/>
<rect x="188.8" y="285.8" width="2.4" height="2.4" fill="#102040"/>
<rect x="62.8" y="205.4" width="2.4" height="2.4" fill="#102040"/>
<rect x="285.8" y="253.6" width="2.4" height="2.4" fill="#102040"/>
<rect x="331.2" y="214.5" width="2.4" height="2.4" fill="#102040"/>
<rect x="352.3" y="206.8" width="2.4" height="2.4" fill="#102040"/>
<rect x="258.8" y="213.4" width="2.4" height="2.4" fill="#102040"/>
<rect x="206.8" y="266.8" width="2.4" height="2.4" fill="#102040"/>
<rect x="236.8" y="245.8" width="2.4" height="2.4" fill="#102040"/>
<polyline points="357,145.5 280,224.6 270.3,271 280.2,278.5 357,274" stroke="#66f6ff" stroke-width="1.5" fill="none"/>
<polyline points="119.4,269.7 177.7,255.8 185.8,242.2 263.6,240.5 335,238.8" stroke="#36f078" stroke-width="2.4" fill="none"/>
<polyline points="185.8,242.2 241.2,250.3" stroke="#36f078" stroke-width="2.4" fill="none"/>
<line x1="111" y1="229" x2="119.4" y2="269.7" stroke="#0e1c2a" stroke-width="1.2"/>
<line x1="156" y1="191.5" x2="177.7" y2="255.8" stroke="#0e1c2a" stroke-width="1.2"/>
<line x1="204" y1="203.6" x2="186.4" y2="241.3" stroke="#0e1c2a" stroke-width="1.2"/>
<line x1="232.5" y1="167.5" x2="241.2" y2="250.3" stroke="#0e1c2a" stroke-width="1.2"/>
<line x1="276" y1="78" x2="263.6" y2="241.3" stroke="#0e1c2a" stroke-width="1.2"/>
<line x1="356" y1="91" x2="335.2" y2="237.8" stroke="#0e1c2a" stroke-width="1.2"/>
<circle cx="119.4" cy="269.7" r="3" fill="#3ee0a0" fill-opacity="0.35" stroke="#0e1c2a" stroke-width="1.1"/>
<circle cx="119.4" cy="269.7" r="1.9" fill="none" stroke="#8af0a0" stroke-width="0.9"/>
<circle cx="177.7" cy="255.8" r="5.5" fill="#2cdcc8" fill-opacity="0.35" stroke="#0e1c2a" stroke-width="1.1"/>
<circle cx="177.7" cy="255.8" r="4.4" fill="none" stroke="#8af0a0" stroke-width="0.9"/>
<circle cx="185.8" cy="242.2" r="5.4" fill="#bcdc3a" fill-opacity="0.95" stroke="#0e1c2a" stroke-width="1.1"/>
<circle cx="241.2" cy="250.3" r="3.5" fill="#3ee0a0" fill-opacity="0.35" stroke="#0e1c2a" stroke-width="1.1"/>
<circle cx="241.2" cy="250.3" r="2.4" fill="none" stroke="#8af0a0" stroke-width="0.9"/>
<circle cx="263.6" cy="241.3" r="3" fill="#3ee0a0" fill-opacity="0.35" stroke="#0e1c2a" stroke-width="1.1"/>
<circle cx="263.6" cy="241.3" r="1.9" fill="none" stroke="#8af0a0" stroke-width="0.9"/>
<circle cx="335.2" cy="237.8" r="3.5" fill="#3ee0a0" fill-opacity="0.35" stroke="#0e1c2a" stroke-width="1.1"/>
<circle cx="335.2" cy="237.8" r="2.4" fill="none" stroke="#8af0a0" stroke-width="0.9"/>
<rect x="351.5" y="88" width="3.5" height="5" fill="#80404f"/>
<text x="76" y="233.3" font-family="Liberation Sans" font-size="9" fill="#80404f" stroke="#50384a" stroke-width="0.35">benzene</text>
<text x="125.3" y="194.70000000000002" font-family="Liberation Sans" font-size="9" fill="#80404f" stroke="#50384a" stroke-width="0.35">toluene</text>
<text x="180" y="203.3" font-family="Liberation Sans" font-size="9" fill="#80404f" stroke="#50384a" stroke-width="0.35">2-hexanone</text>
<text x="178.7" y="171.0" font-family="Liberation Sans" font-size="9" fill="#80404f" stroke="#50384a" stroke-width="0.35">ethylbenzene</text>
</svg><!--/PLOT-->

<!-- status bar -->
<div class="a" style="left:6px;top:421px;width:356px;height:22px;background:#f0f0f0"></div>
<div class="a" style="left:10px;top:426px;width:75px;height:13px;border:1px solid #a0a0a0;border-right-color:#e8e8e8;border-bottom-color:#e8e8e8"></div>
<div class="t" style="left:13px;top:426.3px;transform:scaleX(.925);transform-origin:0 50%">Position: (0.0,0.0)</div>
<div class="a" style="left:90px;top:426px;width:45px;height:13px;border:1px solid #a0a0a0;border-right-color:#e8e8e8;border-bottom-color:#e8e8e8"></div>
<div class="t" style="left:93px;top:426.3px;transform:scaleX(.91);transform-origin:0 50%">Value: 0.0</div>

<!-- dropdown menu -->
<div class="a" style="left:166px;top:37px;width:185px;height:118px;background:#f0f0f0;border:1px solid #979797;box-shadow:2px 2px 2px rgba(0,0,0,.25)"></div>
<div class="a" style="left:188px;top:38px;width:1px;height:116px;background:#e2e2e2"></div>
<div class="t" style="left:191.5px;top:41.5px">New Calibration...</div>
<div class="t" style="left:191.5px;top:58px">New Calibration from Existing Table...</div>
<div class="t" style="left:191.5px;top:75px">New Calibration from Current Image</div>
<div class="a" style="left:190px;top:92px;width:159px;height:2px;border-top:1px solid #dadada;border-bottom:1px solid #fff"></div>
<div class="t" style="left:191.5px;top:98.5px">Load Calibration...</div>
<div class="a" style="left:190px;top:116px;width:159px;height:2px;border-top:1px solid #dadada;border-bottom:1px solid #fff"></div>
<div class="t" style="left:191.5px;top:123px">Amount Table</div>
<div class="t" style="left:191.5px;top:139.5px">Calibration Table</div>

<!-- ============ DIALOG ============ -->
<div class="a" style="left:355px;top:0;width:544px;height:449px;background:#2a3440;border-radius:5px 5px 0 0"></div>
<div class="a" style="left:356px;top:1.3px;width:541px;height:446.5px;background:#bfd4ec;border-left:1px solid #eaf2fb;border-radius:4px 4px 0 0"></div>
<div class="a" style="left:356px;top:1.3px;width:541px;height:23.2px;background:linear-gradient(#9cb4d0,#b9cfe8);border-top:1.5px solid #d4e0ea;border-left:1px solid #eaf2fb;border-radius:4px 4px 0 0"></div>
<div class="a" style="left:362px;top:9px;width:12px;height:12px;border-radius:2px;background:#5f95cf"></div>
<div class="a" style="left:364.5px;top:11.5px;width:7px;height:7px;border-radius:50%;background:#dde9f6"></div>
<div class="t" style="left:377.5px;top:9.5px;font-size:9.8px;transform:scaleX(.93);transform-origin:0 50%;color:#15202e">Calibration Table</div>
<!-- close btn -->
<div class="a" style="left:868px;top:9px;width:23px;height:13px;border:1px solid #6e2a22;border-radius:3px;background:linear-gradient(#ecb4a4 0%,#e0998a 46%,#c9553f 54%,#d46a52 100%)"></div>
<svg class="a" style="left:868px;top:9px" width="23" height="13" viewBox="0 0 23 13"><path d="M8.8,4 L14.6,9 M14.6,4 L8.8,9" stroke="#6a2a20" stroke-opacity="0.6" stroke-width="3"/><path d="M8.8,4 L14.6,9 M14.6,4 L8.8,9" stroke="#fff" stroke-width="1.7"/></svg>
<!-- content -->
<div class="a" style="left:361px;top:24.5px;width:532px;height:418px;background:#f0f0f0"></div>


<div class="d">
<!-- dialog toolbar -->
<div class="a" style="left:363px;top:25.2px;width:42.5px;height:15.5px;border:1px solid #c4c4c4;border-radius:2px;background:linear-gradient(#fbfbfb,#eaeaea)"></div>
<div class="a" style="left:364.3px;top:27px;width:40px;height:12.6px;border:1px dotted #2a2a2a"></div>
<svg class="a" style="left:360px;top:24px" width="70" height="20" viewBox="360 24 70 20">
 <path d="M365,31 L365,37.3 L376,37.3 L376,31" fill="none" stroke="#4a6ea8" stroke-width="1.5"/>
 <path d="M367.8,35.2 L374,29.3" stroke="#2d4f86" stroke-width="1.1"/>
 <circle cx="374.2" cy="29.2" r="1.1" fill="#2d4f86"/>
 <path d="M415.5,28.5 L420.5,28.5 L423,31 L423,38 L415.5,38 Z" fill="#f4f6f2" stroke="#7d857d" stroke-width="0.9"/>
 <path d="M417,33 L421.5,33 M417,35 L421.5,35" stroke="#5fb8a0" stroke-width="0.9"/>
</svg>
<div class="t" style="left:378px;top:27.5px">Export</div>
<div class="a" style="left:407.5px;top:26px;width:1px;height:13px;background:#a8a8a8"></div>
<div class="t" style="left:427.5px;top:27.5px">Save Report</div>
<div class="a" style="left:477px;top:26px;width:1px;height:13px;background:#a8a8a8"></div>
<div class="t" style="left:482px;top:27.5px">Add Run</div>
<div class="t" style="left:517px;top:27.5px">Delete Run</div>

<!-- source path -->
<div class="t" style="left:364.5px;top:44.5px">Source Path:</div>
<div class="a" style="left:415px;top:43.3px;width:474px;height:14.3px;border:1px solid #c6c6c6;background:#f2f2f2"></div>
<div class="t" style="left:417px;top:44.6px;color:#7b7b7b">C:\GC Image\Project\NewProject\Processing\CalTable.csv</div>

<!-- calibrants group -->
<div class="a" style="left:363px;top:63px;width:211px;height:151px;border:1px solid #e0e0e0;border-radius:2px;box-shadow:inset 1px 1px 0 #fafafa"></div>
<div class="a" style="left:365px;top:60px;width:42px;height:10px;background:#f0f0f0"></div>
<div class="t" style="left:367.5px;top:59.5px">Calibrants</div>
<div class="a" style="left:370px;top:80px;width:9px;height:3px;background:#9a9a9a"></div>
<div class="a" style="left:373px;top:77px;width:3px;height:9px;background:#9a9a9a"></div>
<svg class="a" style="left:386px;top:75.5px" width="12" height="12" viewBox="0 0 12 12"><path d="M2,2 L10,10 M10,2 L2,10" stroke="#989898" stroke-width="3" stroke-linecap="butt"/></svg>
<div class="t" style="left:403px;top:75px;color:#a2a2a2">Assign</div>
<div class="a" style="left:429.5px;top:80px;width:0;height:0;border-left:2.5px solid transparent;border-right:2.5px solid transparent;border-top:3px solid #a0a0a0"></div>

<!-- calibrants table -->
<div class="a" style="left:365px;top:91px;width:207px;height:121px;border:1px solid #9c9c9c;background:#efefef"></div>
<div class="a" style="left:366px;top:92px;width:205px;height:17.5px;background:linear-gradient(#ffffff,#f1f2f4);border-bottom:1px solid #d8d8d8"></div>
<div class="a" style="left:468px;top:92px;width:1px;height:17px;background:#e0e0e0"></div>
<div class="t" style="left:369px;top:95px">Calibrant</div>
<div class="t" style="left:472px;top:95px">ISTD</div>
<div class="a" style="left:366px;top:110.5px;width:205px;height:11.7px;background:#3d8ee6;border-top:1px solid #8cc0f0"></div>
<div class="t" style="left:367px;top:110.5px;color:#e6f2ff">toluene</div>
<div class="t" style="left:470px;top:110.5px;color:#e6f2ff">2-hexanone</div>
<div class="a" style="left:366px;top:122.5px;width:205px;height:12px;background:#fff;border:1px solid #a9a9a9;border-top:none;border-right-color:#a0a0a0"></div>
<div class="a" style="left:468px;top:122.5px;width:1px;height:12px;background:#a9a9a9"></div>
<div class="t" style="left:367px;top:122.5px;color:#111">2-hexanone</div>
<div class="a" style="left:366px;top:134.5px;width:205px;height:12px;background:#fff;border:1px solid #a9a9a9;border-top:none;border-right-color:#a0a0a0"></div>
<div class="a" style="left:468px;top:134.5px;width:1px;height:12px;background:#a9a9a9"></div>
<div class="t" style="left:367px;top:134.5px;color:#111">o-xylene</div>
<div class="t" style="left:470px;top:134.5px;color:#111">2-hexanone</div>
<div class="a" style="left:366px;top:146.5px;width:205px;height:12px;background:#fff;border:1px solid #a9a9a9;border-top:none;border-right-color:#a0a0a0"></div>
<div class="a" style="left:468px;top:146.5px;width:1px;height:12px;background:#a9a9a9"></div>
<div class="t" style="left:367px;top:146.5px;color:#111">1,2,4 trimethylbenzene</div>
<div class="t" style="left:470px;top:146.5px;color:#111">2-hexanone</div>
<div class="a" style="left:366px;top:158.5px;width:205px;height:12px;background:#fff;border:1px solid #a9a9a9;border-top:none;border-right-color:#a0a0a0"></div>
<div class="a" style="left:468px;top:158.5px;width:1px;height:12px;background:#a9a9a9"></div>
<div class="t" style="left:367px;top:158.5px;color:#111">ethylbenzene</div>
<div class="t" style="left:470px;top:158.5px;color:#111">2-hexanone</div>
<div class="a" style="left:366px;top:170.5px;width:205px;height:12px;background:#fff;border:1px solid #a9a9a9;border-top:none;border-right-color:#a0a0a0"></div>
<div class="a" style="left:468px;top:170.5px;width:1px;height:12px;background:#a9a9a9"></div>
<div class="t" style="left:367px;top:170.5px;color:#111">benzene</div>
<div class="t" style="left:470px;top:170.5px;color:#111">2-hexanone</div>


<!-- settings group -->
<div class="a" style="left:363px;top:219.5px;width:211px;height:195px;border:1px solid #e0e0e0;border-radius:2px;box-shadow:inset 1px 1px 0 #fafafa"></div>
<div class="a" style="left:365px;top:216px;width:34px;height:10px;background:#f0f0f0"></div>
<div class="t" style="left:367px;top:216.5px">Settings</div>
<div class="t" style="left:365px;top:228.5px">Calibration</div>
<div class="a" style="left:407px;top:234px;width:165px;height:2px;border-top:1px solid #a4a4a4;border-bottom:1px solid #fff"></div>
<div class="t" style="left:370px;top:245.8px">Type:</div>
<div class="t" style="left:370px;top:264.8px">Fit:</div>
<div class="a cb" style="left:487px;top:244px;width:84.5px;height:14.5px"></div>
<div class="t" style="left:489.5px;top:245.2px;color:#767676">Internal Standard</div>
<div class="arr" style="left:562px;top:250px"></div>
<div class="a cb" style="left:487px;top:263.5px;width:84.5px;height:14.5px"></div>
<div class="t" style="left:489.5px;top:264.8px;color:#767676">Linear</div>
<div class="arr" style="left:562px;top:269.5px"></div>
<div class="a chk" style="left:368.5px;top:287px"></div>
<div class="t" style="left:380.5px;top:285.8px;color:#9a9a9a">Use Quantifier Ion</div>
<div class="t" style="left:365px;top:304px">Quantification</div>
<div class="a" style="left:419px;top:310px;width:153px;height:2px;border-top:1px solid #a4a4a4;border-bottom:1px solid #fff"></div>
<div class="t" style="left:370px;top:322px">Target:</div>
<div class="t" style="left:370px;top:341.4px">Measure Quantifier Ion by:</div>
<div class="t" style="left:370px;top:360.4px">Uncalibrated Response Source:</div>
<div class="a cb" style="left:487px;top:320px;width:84.5px;height:14.5px"></div>
<div class="t" style="left:489.5px;top:321.5px;color:#767676">Included</div>
<div class="arr" style="left:562px;top:326.5px"></div>
<div class="a cb" style="left:487px;top:339.5px;width:84.5px;height:14.5px"></div>
<div class="t" style="left:489.5px;top:341px;color:#767676">Default</div>
<div class="arr" style="left:562px;top:346px"></div>
<div class="a cb" style="left:487px;top:359px;width:84.5px;height:14.5px"></div>
<div class="t" style="left:489.5px;top:360.5px;color:#767676">Volume</div>
<div class="arr" style="left:562px;top:365.5px"></div>
<div class="a chk" style="left:368.5px;top:382px"></div>
<div class="t" style="left:380.5px;top:380.7px;color:#9a9a9a">Allow Extrapolation</div>
<div class="a btn" style="left:471px;top:396px;width:99.5px;height:15.5px"></div>
<div class="t" style="left:471px;top:398px;width:99.5px;text-align:center;transform-origin:50% 50%">Configure Defaults...</div>

<!-- right panel -->
<div class="t" style="left:589.5px;top:69px">Name:</div>
<div class="a" style="left:615.3px;top:67.3px;width:266px;height:15px;border:1px solid #b4b4b4;border-top-color:#a4a4a4;background:#fff"></div>
<div class="t" style="left:618px;top:69px;color:#6d6d6d">toluene</div>
<div class="t" style="left:589.5px;top:96.3px">Calibrant Response Source:</div>
<div class="t" style="left:589.5px;top:115.8px">ISTD Calibrant:</div>
<div class="t" style="left:589.5px;top:135.3px">ISTD Response Source:</div>
<div class="a cb" style="left:695px;top:94.7px;width:186.7px;height:14.7px"></div>
<div class="t" style="left:697.5px;top:96px;color:#767676">Volume(-)</div>
<div class="arr" style="left:872px;top:101px"></div>
<div class="a cb" style="left:695px;top:114.2px;width:186.7px;height:14.7px"></div>
<div class="t" style="left:697.5px;top:115.5px;color:#767676">2-hexanone</div>
<div class="arr" style="left:872px;top:120.5px"></div>
<div class="a cb" style="left:695px;top:133.7px;width:186.7px;height:14.7px"></div>
<div class="t" style="left:697.5px;top:135px;color:#767676">Volume(-)</div>
<div class="arr" style="left:872px;top:140px"></div>

<!-- tabs -->
<div class="a" style="left:582.5px;top:172.5px;width:305px;height:241px;border:1px solid #a9a9a9;background:#f3f3f3"></div>
<div class="a" style="left:654.6px;top:159.5px;width:69px;height:14px;border:1px solid #9c9c9c;border-bottom:none;background:linear-gradient(#e9e9e9,#d4d4d4)"></div>
<div class="t" style="left:658px;top:161px">Calibration Curve</div>
<div class="a" style="left:582.5px;top:158px;width:72.5px;height:16px;border:1px solid #a9a9a9;border-bottom:none;background:#f6f6f6"></div>
<div class="t" style="left:587.8px;top:159px">Calibration Points</div>
<div class="a" style="left:585px;top:175.8px;width:300px;height:235px;border:1px solid #7c7c7c;border-right-color:#b0b0b0;border-bottom-color:#7c7c7c;background:#f0f0f0"></div>
<div class="a" style="left:590px;top:185px;width:9px;height:3px;background:#9a9a9a"></div>
<div class="a" style="left:593px;top:182px;width:3px;height:9px;background:#9a9a9a"></div>
<svg class="a" style="left:605.5px;top:180.5px" width="12" height="12" viewBox="0 0 12 12"><path d="M2,2 L10,10 M10,2 L2,10" stroke="#989898" stroke-width="3" stroke-linecap="butt"/></svg>
<div class="a" style="left:622.6px;top:182px;width:12px;height:10px;background:#9c9c9c;border-radius:1px"></div>
<div class="t" style="left:637px;top:180.5px;color:#a2a2a2">Edit</div>
<!-- points table -->
<div class="a" style="left:586px;top:196.7px;width:299px;height:213px;border-top:1px solid #a0a0a0;background:#efefef"></div>
<div class="a" style="left:586px;top:197.5px;width:299px;height:16px;background:linear-gradient(#ffffff,#f1f2f4);border-bottom:1px solid #d8d8d8"></div>
<div class="a" style="left:660.4px;top:198px;width:1px;height:15px;background:#e0e0e0"></div>
<div class="a" style="left:735px;top:198px;width:1px;height:15px;background:#e0e0e0"></div>
<div class="a" style="left:810.2px;top:198px;width:1px;height:15px;background:#e0e0e0"></div>
<div class="t" style="left:589.6px;top:199.5px">Run</div>
<div class="t" style="left:664.8px;top:199.5px">Amount</div>
<div class="t" style="left:738.5px;top:199.5px">Response</div>
<div class="t" style="left:813.5px;top:199.5px">Response Source</div>
<div class="a" style="left:586px;top:214.3px;width:299px;height:12.1px;background:#fff;border:1px solid #a9a9a9;border-top:none;border-right-color:#7c7c7c"></div>
<div class="a" style="left:660.4px;top:214.3px;width:1px;height:12.1px;background:#a9a9a9"></div>
<div class="a" style="left:735px;top:214.3px;width:1px;height:12.1px;background:#a9a9a9"></div>
<div class="a" style="left:810.2px;top:214.3px;width:1px;height:12.1px;background:#a9a9a9"></div>
<div class="t" style="left:587px;top:215.1px">Cal01_Run01_Im...</div>
<div class="t" style="left:660.4px;width:72.6px;text-align:right;transform-origin:100% 50%;top:215.1px">13.5</div>
<div class="t" style="left:735px;width:74px;text-align:right;transform-origin:100% 50%;top:215.1px">138,815.104</div>
<div class="t" style="left:812px;top:215.1px">-</div>
<div class="a" style="left:586px;top:226.4px;width:299px;height:12.1px;background:#fff;border:1px solid #a9a9a9;border-top:none;border-right-color:#7c7c7c"></div>
<div class="a" style="left:660.4px;top:226.4px;width:1px;height:12.1px;background:#a9a9a9"></div>
<div class="a" style="left:735px;top:226.4px;width:1px;height:12.1px;background:#a9a9a9"></div>
<div class="a" style="left:810.2px;top:226.4px;width:1px;height:12.1px;background:#a9a9a9"></div>
<div class="t" style="left:587px;top:227.2px">Cal02_Run01_Im...</div>
<div class="t" style="left:660.4px;width:72.6px;text-align:right;transform-origin:100% 50%;top:227.2px">8.99</div>
<div class="t" style="left:735px;width:74px;text-align:right;transform-origin:100% 50%;top:227.2px">91,821.015</div>
<div class="t" style="left:812px;top:227.2px">-</div>
<div class="a" style="left:586px;top:238.5px;width:299px;height:12.1px;background:#fff;border:1px solid #a9a9a9;border-top:none;border-right-color:#7c7c7c"></div>
<div class="a" style="left:660.4px;top:238.5px;width:1px;height:12.1px;background:#a9a9a9"></div>
<div class="a" style="left:735px;top:238.5px;width:1px;height:12.1px;background:#a9a9a9"></div>
<div class="a" style="left:810.2px;top:238.5px;width:1px;height:12.1px;background:#a9a9a9"></div>
<div class="t" style="left:587px;top:239.3px">Cal03_Run01_Im...</div>
<div class="t" style="left:660.4px;width:72.6px;text-align:right;transform-origin:100% 50%;top:239.3px">4.5</div>
<div class="t" style="left:735px;width:74px;text-align:right;transform-origin:100% 50%;top:239.3px">45,155.843</div>
<div class="t" style="left:812px;top:239.3px">-</div>
<div class="a" style="left:586px;top:250.6px;width:299px;height:12.1px;background:#fff;border:1px solid #a9a9a9;border-top:none;border-right-color:#7c7c7c"></div>
<div class="a" style="left:660.4px;top:250.6px;width:1px;height:12.1px;background:#a9a9a9"></div>
<div class="a" style="left:735px;top:250.6px;width:1px;height:12.1px;background:#a9a9a9"></div>
<div class="a" style="left:810.2px;top:250.6px;width:1px;height:12.1px;background:#a9a9a9"></div>
<div class="t" style="left:587px;top:251.4px">Cal04_Run01_Im...</div>
<div class="t" style="left:660.4px;width:72.6px;text-align:right;transform-origin:100% 50%;top:251.4px">2.25</div>
<div class="t" style="left:735px;width:74px;text-align:right;transform-origin:100% 50%;top:251.4px">24,605.47</div>
<div class="t" style="left:812px;top:251.4px">-</div>
<div class="a" style="left:586px;top:262.7px;width:299px;height:12.1px;background:#fff;border:1px solid #a9a9a9;border-top:none;border-right-color:#7c7c7c"></div>
<div class="a" style="left:660.4px;top:262.7px;width:1px;height:12.1px;background:#a9a9a9"></div>
<div class="a" style="left:735px;top:262.7px;width:1px;height:12.1px;background:#a9a9a9"></div>
<div class="a" style="left:810.2px;top:262.7px;width:1px;height:12.1px;background:#a9a9a9"></div>
<div class="t" style="left:587px;top:263.5px">Cal05_Run01_Im...</div>
<div class="t" style="left:660.4px;width:72.6px;text-align:right;transform-origin:100% 50%;top:263.5px">0.899</div>
<div class="t" style="left:735px;width:74px;text-align:right;transform-origin:100% 50%;top:263.5px">9,964.752</div>
<div class="t" style="left:812px;top:263.5px">-</div>

<!-- bottom buttons -->
<div class="a btn" style="left:757.2px;top:423px;width:78.5px;height:15.5px"></div>
<div class="t" style="left:757.2px;top:423.7px;width:78.5px;text-align:center;transform-origin:50% 50%">Save and Apply</div>
<div class="a btn" style="left:841.2px;top:423px;width:47px;height:15.5px"></div>
<div class="t" style="left:841.2px;top:423.7px;width:47px;text-align:center;transform-origin:50% 50%">Cancel</div>
</div>

</body></html>
